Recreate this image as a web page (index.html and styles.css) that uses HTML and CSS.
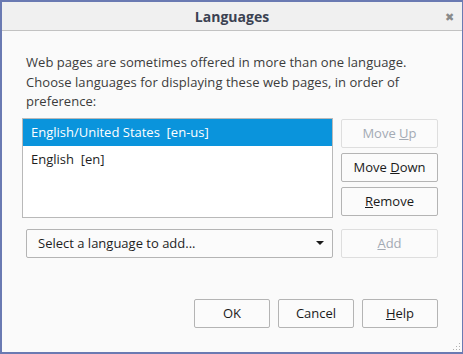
FILE: index.html
```html
<!DOCTYPE html>
<html lang="en">
  <head>
    <meta charset="UTF-8" />
    <title>Languages</title>
    <link rel="stylesheet" href="styles.css">
  </head>
  <body>
    <div class="window">
      <div class="titlebar">
        <span class="title">Languages</span>
        <span class="close">&#x2716;</span>
      </div>
      <div class="content">
        <p class="intro">Web pages are sometimes offered in more than one language.<br>Choose languages for displaying these web pages, in order of<br>preference:</p>
        <div class="lang-row">
          <ul class="listbox">
            <li class="item selected">English/United States&nbsp; [en-us]</li>
            <li class="item">English&nbsp; [en]</li>
          </ul>
          <div class="side-btns">
            <button class="btn" disabled>Move <u>U</u>p</button>
            <button class="btn">Move <u>D</u>own</button>
            <button class="btn"><u>R</u>emove</button>
          </div>
        </div>
        <div class="add-row">
          <div class="select">
            <span>Select a language to add...</span>
            <span class="arrow"></span>
          </div>
          <button class="btn" disabled><u>A</u>dd</button>
        </div>
        <div class="footer">
          <button class="btn foot">OK</button>
          <button class="btn foot">Cancel</button>
          <button class="btn foot"><u>H</u>elp</button>
        </div>
      </div>
      <svg class="grip" width="8" height="8" viewBox="0 0 8 8">
        <rect x="6" y="0" width="1" height="1" fill="#b0b0b0"/>
        <rect x="3" y="3" width="1" height="1" fill="#b0b0b0"/>
        <rect x="6" y="3" width="1" height="1" fill="#b0b0b0"/>
        <rect x="0" y="6" width="1" height="1" fill="#b0b0b0"/>
        <rect x="3" y="6" width="1" height="1" fill="#b0b0b0"/>
        <rect x="6" y="6" width="1" height="1" fill="#b0b0b0"/>
      </svg>
    </div>
  </body>
</html>
```
FILE: styles.css
```css
* {
  margin: 0;
  padding: 0;
  box-sizing: border-box;
}
body {
  font-family: "Open Sans", "Noto Sans", sans-serif;
  font-size: 13px;
  color: #3a3a3a;
  background-color: #6a7ab2;
}
.window {
  position: relative;
  width: 463px;
  height: 354px;
  border: 2px solid #6a7ab2;
  border-right-width: 1px;
  background-color: #fafafa;
}
.titlebar {
  height: 29px;
  background-color: #f0f0f0;
  border-bottom: 1px solid #c2c2c2;
  display: flex;
  justify-content: center;
  align-items: center;
}
.title {
  font-weight: 700;
  font-size: 14px;
  color: #3b4252;
}
.close {
  position: absolute;
  right: 8px;
  top: 7px;
  font-size: 11px;
  color: #8a8a8a;
}
.content {
  padding: 0 24px 0 20px;
}
.intro {
  margin: 22px 0 0 4px;
  line-height: 19.5px;
  color: #3c3c3c;
  letter-spacing: 0.05px;
}
.lang-row {
  display: flex;
  gap: 8px;
  margin-top: 6px;
}
.listbox {
  list-style: none;
  width: 311px;
  height: 100px;
  border: 1px solid #b9b9b9;
  background-color: #fff;
  color: #1e1e1e;
}
.item {
  height: 27px;
  line-height: 27px;
  padding-left: 8px;
}
.selected {
  background-color: #0a94dc;
  color: #fff;
}
.side-btns {
  display: flex;
  flex-direction: column;
  gap: 5px;
  padding-top: 1px;
}
.btn {
  width: 97px;
  height: 29px;
  font-family: inherit;
  font-size: 13px;
  color: #1a1a1a;
  background-color: #fbfbfb;
  border: 1px solid #b4b4b4;
  border-radius: 2px;
}
.btn:disabled {
  color: #a3aab4;
  border-color: #dedede;
}
.add-row {
  display: flex;
  gap: 8px;
  margin-top: 11px;
  padding-left: 4px;
}
.select {
  width: 307px;
  height: 29px;
  border: 1px solid #b4b4b4;
  border-radius: 2px;
  background-color: #fbfbfb;
  color: #1e1e1e;
  display: flex;
  align-items: center;
  justify-content: space-between;
  padding: 0 8px 0 11px;
}
.arrow {
  width: 0;
  height: 0;
  border-left: 4px solid transparent;
  border-right: 4px solid transparent;
  border-top: 4px solid #1a1a1a;
}
.footer {
  display: flex;
  justify-content: flex-end;
  gap: 8px;
  margin-top: 41px;
}
.foot {
  width: 76px;
}
.grip {
  position: absolute;
  right: 1px;
  bottom: 1px;
}
```
